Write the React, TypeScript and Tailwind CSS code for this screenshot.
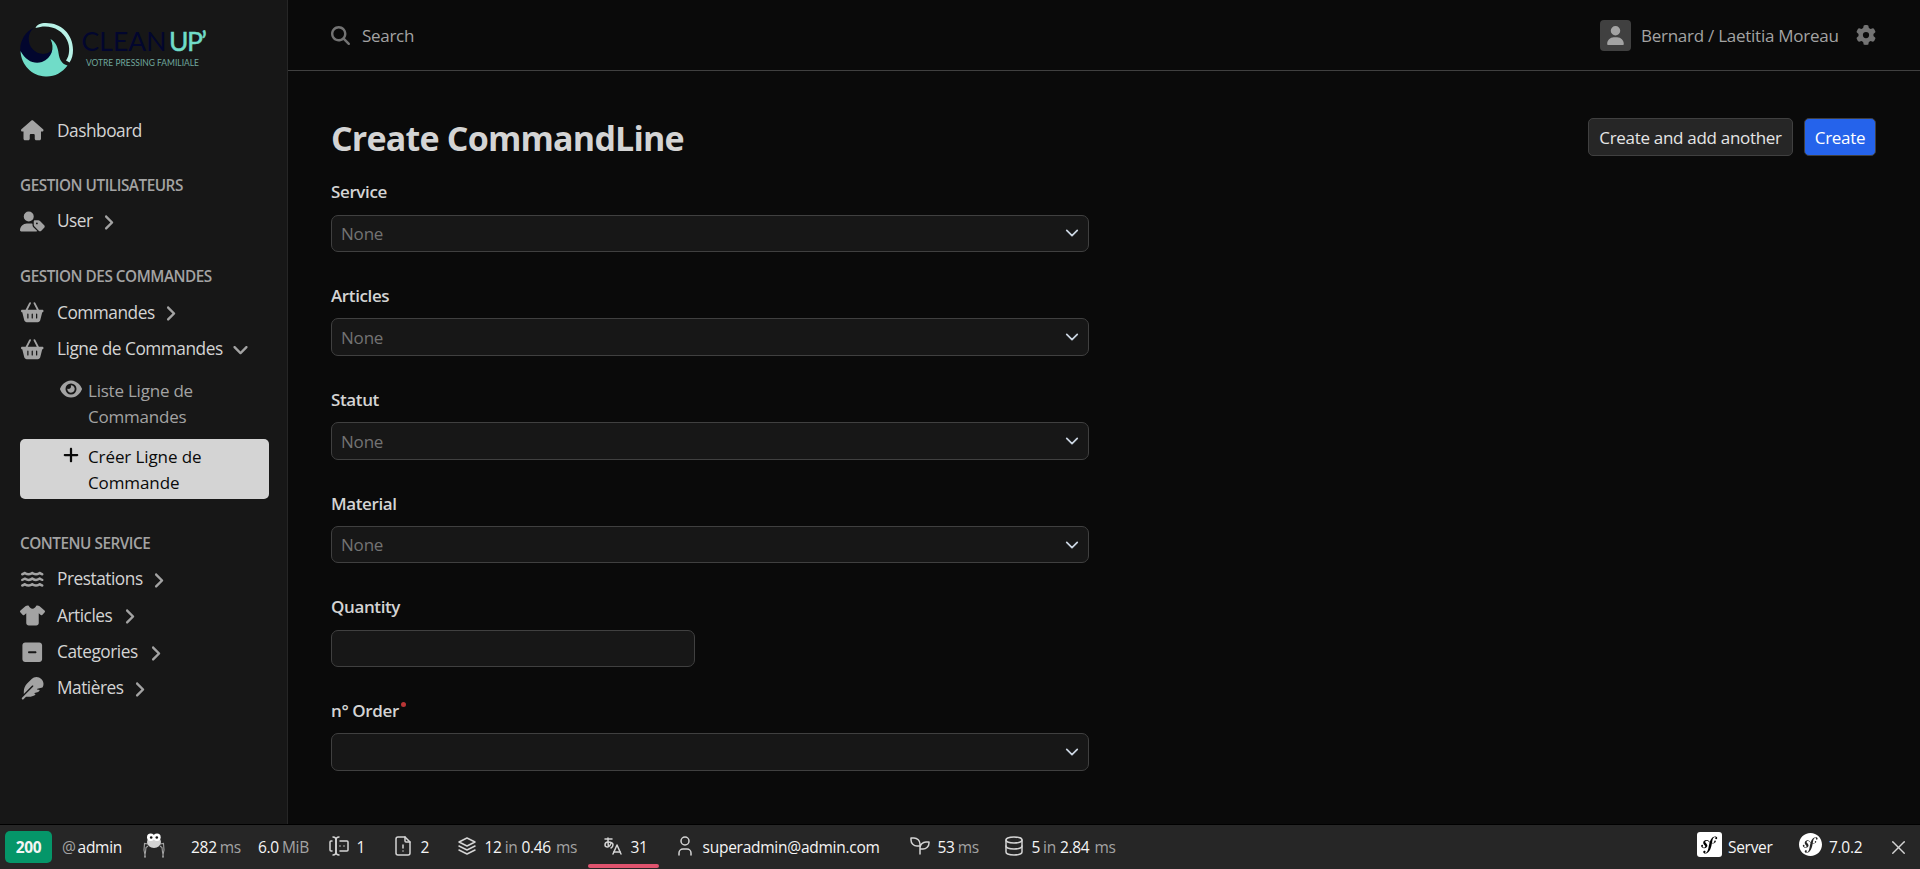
import type { ReactNode } from "react";
import type { IconType } from "react-icons";
import {
  FaHouse, FaUserTag, FaBasketShopping, FaEye, FaPlus, FaWater, FaShirt, FaSquareMinus,
  FaFeather, FaAngleRight, FaAngleDown, FaGear, FaUser, FaMagnifyingGlass,
} from "react-icons/fa6";
import { TbForms, TbFileAlert, TbStack2, TbLanguageHiragana, TbUser, TbDatabase, TbX } from "react-icons/tb";
import { SiSymfony } from "react-icons/si";

function Logo() {
  return (
    <svg width="190" height="56" viewBox="0 0 190 56" className="block">
      <path d="M14.5 5.5C4 10 -1 21 .5 31C4 38.500 12 42.500 21 40.500C28 38.500 32.500 33 33 26C29 34 18 33.500 12.500 27C6.500 20 8 10 14.500 5.500Z" fill="#02062e" />
      <path d="M.5 29C6 39 14 42.500 22 40C32 36 35 26 30.500 17C36 20 38 26 38.500 31C39.500 38 42 42 47.500 43.500C42 51 34 55 25.500 54.500C12 54 1 43 .5 29Z" fill="#70dcc8" />
      <path d="M15.500 6C17 2.500 20 1 26 1C41 1 53 12 53 28C53 33 52 37 49.500 40.500L46 38.500C49.500 34 50.500 25 47 18C42 7 29 1.500 15.500 6Z" fill="#b8f2e7" />
      <text x="61.500" y="29" fontFamily="Lato, sans-serif" fontSize="26.500" fontWeight="400" fill="#02062e" textLength="85">CLEAN</text>
      <text x="149" y="29" fontFamily="Lato, sans-serif" fontSize="26.500" fontWeight="400" fill="#70dcc8" stroke="#70dcc8" strokeWidth=".5" textLength="38">UP’</text>
      <text x="66" y="43.500" fontFamily="Lato, sans-serif" fontSize="9" fontWeight="400" fill="#70a79d" textLength="113" lengthAdjust="spacingAndGlyphs">VOTRE PRESSING FAMILIALE</text>
    </svg>
  );
}

function NavItem({ icon: Icon, label, width, open, wide }: { icon: IconType; label: string; width: string; open?: boolean; wide?: boolean }) {
  return (
    <div className="flex h-[36.400px] items-center text-[17.300px] tracking-[-0.480px] text-[#d4d4d4]">
      <span className={`mr-[12px] flex w-[25px] shrink-0 justify-center text-[#a3a3a3] ${wide ? "text-[25px]" : "text-[22.500px]"}`}><Icon /></span>
      <span className={`${width} shrink-0 whitespace-nowrap`}>{label}</span>
      <span className="relative top-px text-[19px] text-[#a3a3a3]">
        {open ? <FaAngleDown /> : open === false ? <FaAngleRight /> : null}
      </span>
    </div>
  );
}

function Section({ children }: { children: ReactNode }) {
  return <div className="flex h-[37px] items-center whitespace-nowrap pt-[2px] text-[15.300px] font-semibold tracking-[-0.470px] text-[#a3a3a3]">{children}</div>;
}

function Field({ label, value, required, narrow }: { label: string; value?: string; required?: boolean; narrow?: boolean }) {
  return (
    <div className="h-[103.750px]">
      <div className="flex h-[27px] items-center text-[17px] font-semibold tracking-[-0.380px] text-[#d4d4d4]">
        {label}
        {required && <span className="mb-[13px] ml-[2px] size-[5px] rounded-full bg-[#b93535]" />}
      </div>
      <div className={`${narrow ? "w-[364px]" : "w-[758px]"} mt-[9px] flex h-[37.500px] items-center justify-between rounded-[7px] border border-[#404040] bg-[#171717] pl-[9px] pr-[9px] text-[17px] tracking-[-0.2px] text-[#737373]`}>
        <span className="pt-px">{value}</span>
        {!narrow && (
          <svg width="14" height="14" viewBox="0 0 16 16" fill="none" stroke="#cbd5e1" strokeWidth="2" strokeLinecap="round" strokeLinejoin="round"><path d="m2 5 6 6 6-6" /></svg>
        )}
      </div>
    </div>
  );
}

function Spider() {
  return (
    <svg width="24" height="26" viewBox="0 0 24 26" fill="none">
      <path d="M6 11 2.500 10.500 2 17 3.500 24.500M6 13 4 14.500 3.500 19 2.500 24.500M18 11 21.500 10.500 22 17 20.500 24.500M18 13 20 14.500 20.500 19 21.500 24.500" stroke="#a3a3a3" strokeWidth="1.100" />
      <ellipse cx="12" cy="9" rx="7" ry="6" fill="#d4d4d4" />
      <circle cx="8.700" cy="4.300" r="3.700" fill="#fff" />
      <circle cx="15" cy="4.300" r="3.700" fill="#fff" />
      <circle cx="9.200" cy="4.500" r="1.300" fill="#171717" />
      <circle cx="14.800" cy="4.500" r="1.300" fill="#171717" />
    </svg>
  );
}

function Seedling() {
  return (
    <svg width="24" height="24" viewBox="0 0 24 24" fill="none" stroke="currentColor" strokeWidth="1.500" strokeLinecap="round" strokeLinejoin="round">
      <path d="M12 10a6 6 0 0 0-6-6H3v2a6 6 0 0 0 6 6h3M12 14a6 6 0 0 1 6-6h3v1a6 6 0 0 1-6 6h-3M12 20V10" />
    </svg>
  );
}

function Stat({ className, icon, children }: { className: string; icon?: ReactNode; children: ReactNode }) {
  return (
    <div className={`${className} flex h-full shrink-0 items-center whitespace-nowrap [&_svg]:stroke-[1.500]`}>
      {icon && <span className="mb-[2px] w-[29.500px] shrink-0 text-[24px] text-[#d4d4d4]">{icon}</span>}
      <span className="flex items-baseline pt-[2px]">{children}</span>
    </div>
  );
}

function Unit({ className = "", children }: { className?: string; children: ReactNode }) {
  return <span className={`${className} font-normal text-[#a3a3a3]`}>{children}</span>;
}

export default function App() {
  return (
    <div className="flex h-[869px] w-[1920px] flex-col overflow-hidden bg-[#0a0a0a] font-['Open_Sans','Noto_Sans',sans-serif]">
      <div className="flex h-[824px] shrink-0">
        <aside className="w-[288px] shrink-0 border-r border-[#262626] bg-[#171717] pl-5 pr-[18px] pt-[22px]">
          <Logo />
          <div className="h-[34.500px]" />
          <NavItem icon={FaHouse} label="Dashboard" width="w-[90px]" />
          <div className="h-[17px]" />
          <Section>GESTION UTILISATEURS</Section>
          <NavItem icon={FaUserTag} wide label="User" width="w-[42px]" open={false} />
          <div className="h-[18px]" />
          <Section>GESTION DES COMMANDES</Section>
          <NavItem icon={FaBasketShopping} label="Commandes" width="w-[104px]" open={false} />
          <NavItem icon={FaBasketShopping} label="Ligne de Commandes" width="w-[174px]" open />
          <div className="mt-[11px] flex text-[17px] leading-[26px] tracking-[-0.220px] text-[#a3a3a3]">
            <FaEye className="ml-[40px] mr-[6px] mt-[1px] w-[22px] shrink-0 text-[20px]" />
            <span>Liste Ligne de<br />Commandes</span>
          </div>
          <div className="mt-[9px] flex h-[60px] rounded-[5px] bg-[#d4d4d4] pt-[5px] text-[17px] font-medium leading-[26px] tracking-[-0.100px] text-[#0a0a0a]">
            <FaPlus className="ml-[40px] mr-[6px] mt-[2px] w-[22px] shrink-0 text-[18px]" />
            <span>Créer Ligne de<br />Commande</span>
          </div>
          <div className="h-[25px]" />
          <Section>CONTENU SERVICE</Section>
          <NavItem icon={FaWater} label="Prestations" width="w-[92px]" open={false} />
          <NavItem icon={FaShirt} wide label="Articles" width="w-[63px]" open={false} />
          <NavItem icon={FaSquareMinus} label="Categories" width="w-[89px]" open={false} />
          <NavItem icon={FaFeather} label="Matières" width="w-[73px]" open={false} />
        </aside>

        <main className="min-w-0 flex-1">
          <header className="flex h-[71px] items-center border-b border-[#404040] pl-[43px] pr-[44px] text-[17px] tracking-[-0.300px] text-[#a3a3a3]">
            <FaMagnifyingGlass className="mr-3 text-[19px] text-[#737373]" />
            <span className="pt-px">Search</span>
            <span className="ml-auto mr-[10px] flex size-[31px] items-center justify-center rounded-[4px] bg-[#404040]"><FaUser className="text-[19px]" /></span>
            <span className="w-[215px] whitespace-nowrap pt-px tracking-[-0.260px]">Bernard / Laetitia Moreau</span>
            <FaGear className="text-[20px] text-[#737373]" />
          </header>
          <div className="pl-[43px] pr-[44px] pt-[47px]">
            <div className="flex h-[38px] items-start justify-between">
              <h1 className="relative top-px text-[34px] font-bold leading-[38px] tracking-[-0.800px] text-[#d4d4d4]">Create CommandLine</h1>
              <div className="flex gap-[11px] text-[17px] tracking-[-0.300px]">
                <button className="flex h-[38px] w-[205px] items-center justify-center whitespace-nowrap rounded-[5px] border border-[#404040] bg-[#262626] pt-px text-[#e5e5e5]">Create and add another</button>
                <button className="flex h-[38px] w-[72px] items-center justify-center rounded-[5px] border border-[#404040] bg-[#2563eb] pt-px text-white">Create</button>
              </div>
            </div>
            <div className="pt-[22.500px]">
              <Field label="Service" value="None" />
              <Field label="Articles" value="None" />
              <Field label="Statut" value="None" />
              <Field label="Material" value="None" />
              <Field label="Quantity" narrow />
              <Field label="n° Order" required />
            </div>
          </div>
        </main>
      </div>

      <footer className="flex h-[45px] shrink-0 items-center border-t border-black bg-[#262626] pl-[5px] text-[15.500px] font-medium tracking-[-0.300px] text-[#f5f5f5]">
        <span className="flex h-[32px] w-[47px] items-center justify-center rounded-[5px] bg-[#059669] pt-[2px] font-bold">200</span>
        <Stat className="ml-[10px] w-[79px]"><Unit className="mr-[2px]">@</Unit>admin</Stat>
        <span className="mb-[2px] w-[50px] pl-px"><Spider /></span>
        <Stat className="w-[67px]">282<Unit className="ml-[3px]">ms</Unit></Stat>
        <Stat className="w-[69px]">6.0<Unit className="ml-[3px]">MiB</Unit></Stat>
        <Stat className="w-[64px]" icon={<TbForms />}>1</Stat>
        <Stat className="w-[64px]" icon={<TbFileAlert />}>2</Stat>
        <Stat className="w-[133px]" icon={<TbStack2 />}>12<Unit className="ml-[3px]">in</Unit><span className="ml-[4px]">0.46</span><Unit className="ml-[5px]">ms</Unit></Stat>
        <div className="relative h-full w-[71px] pl-[13px]">
          <Stat className="" icon={<TbLanguageHiragana />}>31</Stat>
          <span className="absolute bottom-px left-0 h-[4px] w-full rounded-[2px] bg-[#e0536e]" />
        </div>
        <Stat className="ml-[14px] w-[235px] tracking-[-0.250px]" icon={<TbUser />}>superadmin@admin.com</Stat>
        <Stat className="w-[94px]" icon={<Seedling />}>53<Unit className="ml-[3px]">ms</Unit></Stat>
        <Stat className="" icon={<TbDatabase />}>5<Unit className="ml-[3px]">in</Unit><span className="ml-[4px]">2.84</span><Unit className="ml-[5px]">ms</Unit></Stat>
        <div className="ml-auto flex h-full items-center">
          <span className="mb-[5px] mr-[6px] flex size-[25px] items-center justify-center rounded-[3px] bg-white">
            <span className="flex size-[23px] items-center justify-center rounded-full bg-black"><SiSymfony className="shrink-0 text-[25px] text-white" /></span>
          </span>
          <span className="w-[71px] pt-[2px] font-normal">Server</span>
          <SiSymfony className="mb-[5px] mr-[7px] text-[23px] text-white" />
          <span className="w-[58px] pt-[2px] font-normal">7.0.2</span>
          <TbX className="mr-[10px] text-[23px] text-[#d4d4d4] [stroke-width:1.500]" />
        </div>
      </footer>
    </div>
  );
}
